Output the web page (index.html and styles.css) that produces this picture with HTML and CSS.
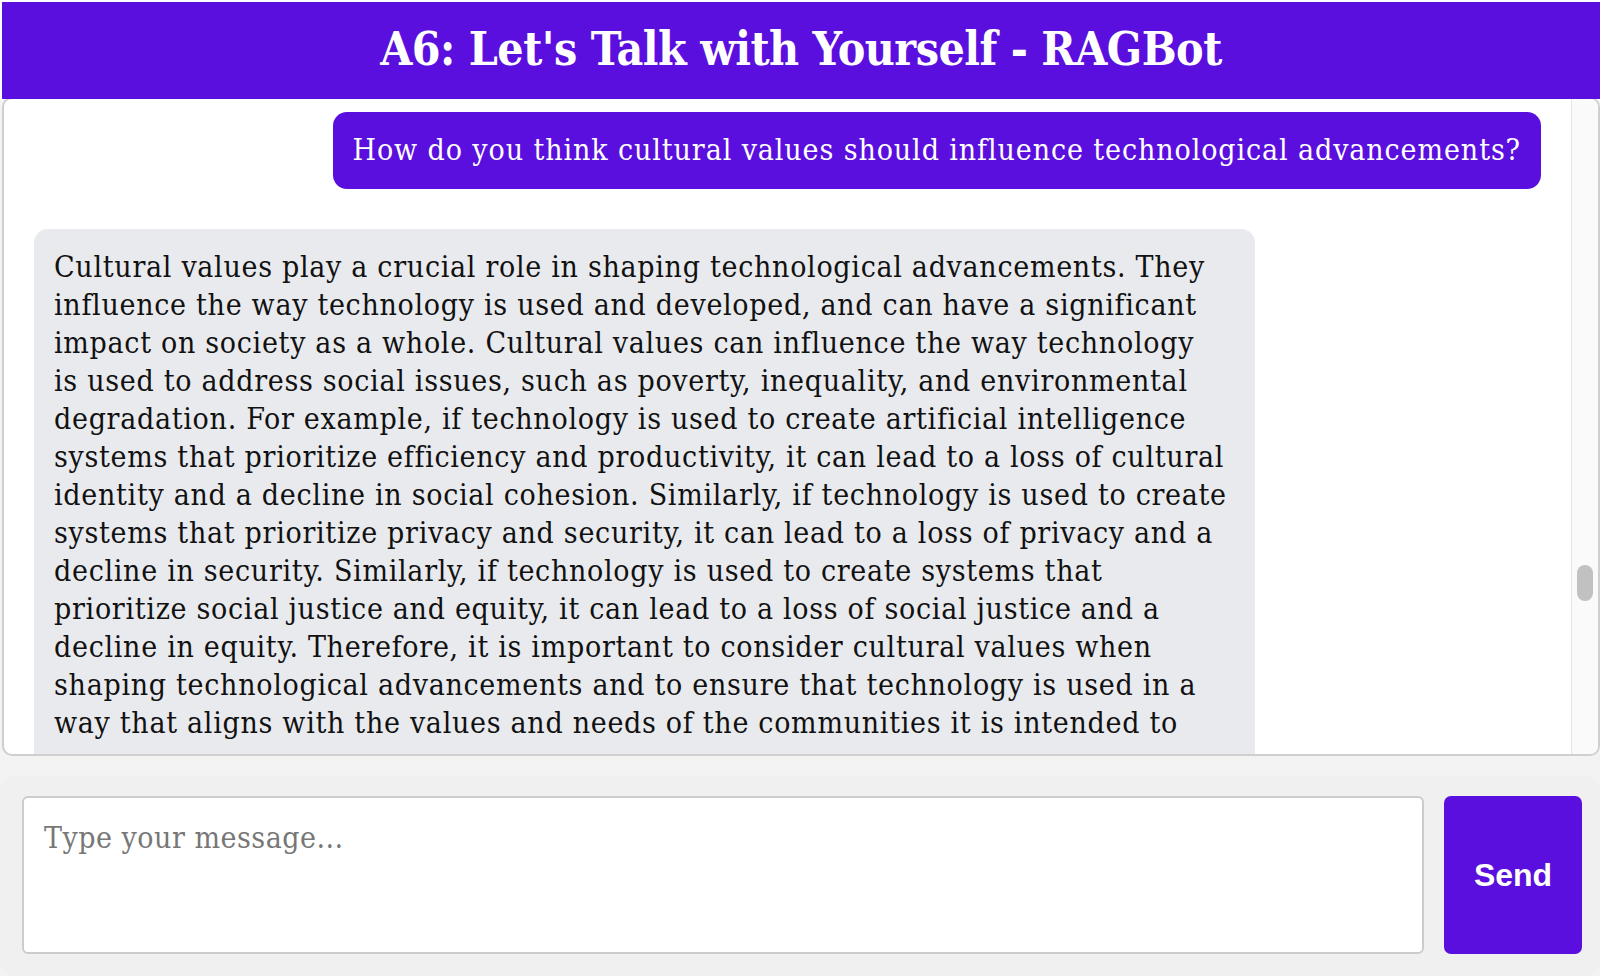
FILE: index.html
```html
<!DOCTYPE html>
<html lang="en">
<head>
<meta charset="utf-8">
<title>A6: Let's Talk with Yourself - RAGBot</title>
<link rel="stylesheet" href="styles.css">
</head>
<body>
<div class="page">
  <header class="header">
    <h1 class="title">A6: Let's Talk with Yourself - RAGBot</h1>
  </header>
  <main class="chat">
    <div class="messages">
      <div class="bubble user">How do you think cultural values should influence technological advancements?</div>
      <div class="bubble bot">Cultural values play a crucial role in shaping technological advancements. They<br>
influence the way technology is used and developed, and can have a significant<br>
impact on society as a whole. Cultural values can influence the way technology<br>
is used to address social issues, such as poverty, inequality, and environmental<br>
degradation. For example, if technology is used to create artificial intelligence<br>
systems that prioritize efficiency and productivity, it can lead to a loss of cultural<br>
identity and a decline in social cohesion. Similarly, if technology is used to create<br>
systems that prioritize privacy and security, it can lead to a loss of privacy and a<br>
decline in security. Similarly, if technology is used to create systems that<br>
prioritize social justice and equity, it can lead to a loss of social justice and a<br>
decline in equity. Therefore, it is important to consider cultural values when<br>
shaping technological advancements and to ensure that technology is used in a<br>
way that aligns with the values and needs of the communities it is intended to<br>
serve.</div>
    </div>
    <div class="scrolltrack"><div class="thumb"></div></div>
  </main>
  <form class="composer">
    <textarea class="input" placeholder="Type your message..."></textarea>
    <button type="button" class="send">Send</button>
  </form>
</div>
</body>
</html>
```

FILE: styles.css
```css
html, body {
  margin: 0;
  padding: 0;
  height: 100%;
}
body {
  background: #ffffff;
  font-family: "DejaVu Serif Condensed", "DejaVu Serif", serif;
  font-stretch: condensed;
  overflow: hidden;
}
.page {
  box-sizing: border-box;
  height: 976px;
  padding: 2px 0 0 2px;
  display: flex;
  flex-direction: column;
  background: linear-gradient(#ffffff 0, #ffffff 100px, #f3f3f3 100px);
}
.header {
  height: 97px;
  flex: 0 0 97px;
  box-sizing: border-box;
  padding-bottom: 4px;
  background: #5a0fdf;
  display: flex;
  align-items: center;
  justify-content: center;
  position: relative;
  z-index: 2;
}
.title {
  margin: 0;
  color: #ffffff;
  font-size: 46px;
  font-weight: bold;
  letter-spacing: -0.5px;
}
.chat {
  flex: 0 0 659px;
  height: 659px;
  box-sizing: border-box;
  margin-top: -2px;
  border: 2px solid #cfcfcf;
  border-radius: 10px;
  background: #ffffff;
  display: flex;
  overflow: hidden;
}
.messages {
  flex: 1;
  overflow: hidden;
  padding: 13px 30px 0 30px;
  display: flex;
  flex-direction: column;
  gap: 40px;
}
.bubble {
  box-sizing: border-box;
  font-size: 30px;
  line-height: 38px;
  letter-spacing: 0.9px;
  padding: 19px 20px 20px;
  border-radius: 14px;
  max-width: 1221px;
}
.user {
  align-self: flex-end;
  background: #5a0fdf;
  color: #ffffff;
}
.bot {
  align-self: flex-start;
  width: 1221px;
  flex-shrink: 0;
  white-space: nowrap;
  letter-spacing: 0.7px;
  background: #e9eaee;
  color: #111111;
}
.scrolltrack {
  flex: 0 0 26px;
  background: #fafafa;
  border-left: 1px solid #e6e6e6;
  padding-top: 466px;
  display: flex;
  justify-content: center;
}
.thumb {
  width: 16px;
  height: 36px;
  border-radius: 8px;
  background: #c1c1c1;
}
.composer {
  margin: 20px 0 0 -2px;
  flex: 1;
  background: #f0f0f0;
  border-radius: 15px;
  padding: 20px 18px 20px 22px;
  display: flex;
  gap: 20px;
}
.input {
  flex: 1;
  box-sizing: border-box;
  height: 158px;
  border: 2px solid #cccccc;
  border-radius: 6px;
  background: #ffffff;
  padding: 21px 20px 18px;
  resize: none;
  font-family: "DejaVu Serif Condensed", "DejaVu Serif", serif;
  font-stretch: condensed;
  font-size: 30px;
  line-height: 38px;
  letter-spacing: 0.5px;
  color: #111;
  outline: none;
}
.input::placeholder {
  color: #777777;
}
.send {
  flex: 0 0 138px;
  height: 158px;
  border: none;
  border-radius: 7px;
  background: #5a0fdf;
  color: #ffffff;
  font-family: "Liberation Sans", Arial, sans-serif;
  font-weight: bold;
  font-size: 32px;
  cursor: pointer;
}
```
